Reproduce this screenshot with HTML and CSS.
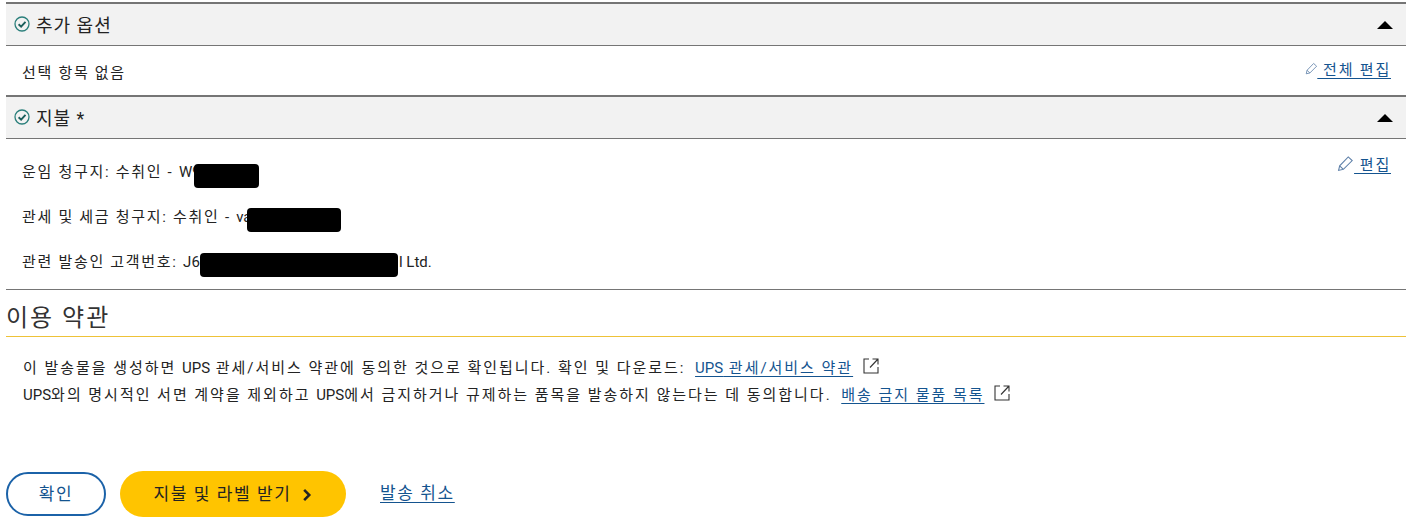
FILE: index.html
```html
<!DOCTYPE html>
<html lang="ko">
<head>
    <meta charset="UTF-8">
    <meta name="viewport" content="width=device-width, initial-scale=1.0">
    <title>UPS 발송 검토</title>
    <link rel="stylesheet" href="styles.css">
</head>
<body>
    <!-- Additional options -->
    <section class="review-section first">
        <div class="review-header">
            <h2>
                <svg class="check-icon" viewBox="0 0 16 16"><circle cx="8" cy="8" r="7"/><path class="tick" d="M4.6 8.2 7.1 10.6 11.5 5.8"/></svg>
                추가 옵션
            </h2>
            <span class="caret"></span>
        </div>
        <div class="review-body options-body">
            <p class="plain-row">선택 항목 없음</p>
            <a class="edit-link" href="#">
                <svg class="pencil small" viewBox="0 0 16 16"><path d="M1.5 14.5 2.5 10.2 10.6 1.8 14.3 5.2 6 13.5ZM2.5 10.2 6 13.5"/></svg>
                <span>&nbsp;전체 편집</span>
            </a>
        </div>
    </section>

    <!-- Payment -->
    <section class="review-section">
        <div class="review-header">
            <h2>
                <svg class="check-icon" viewBox="0 0 16 16"><circle cx="8" cy="8" r="7"/><path class="tick" d="M4.6 8.2 7.1 10.6 11.5 5.8"/></svg>
                지불 *
            </h2>
            <span class="caret"></span>
        </div>
        <div class="review-body payment-body">
            <div class="payment-rows">
                <p class="pay-row">운임 청구지: 수취인 - <span class="lat">W9</span><span class="redact r1"></span></p>
                <p class="pay-row">관세 및 세금 청구지: 수취인 - <span class="lat">va</span><span class="redact r2"></span></p>
                <p class="pay-row">관련 발송인 고객번호: <span class="lat">J6</span><span class="redact r3"></span><span class="tail lat">l Ltd.</span></p>
            </div>
            <a class="edit-link" href="#">
                <svg class="pencil" viewBox="0 0 16 16"><path d="M1.5 14.5 2.5 10.2 10.6 1.8 14.3 5.2 6 13.5ZM2.5 10.2 6 13.5"/></svg>
                <span>&nbsp;편집</span>
            </a>
        </div>
    </section>

    <!-- Terms -->
    <section class="terms">
        <h1>이용 약관</h1>
        <div class="terms-text">
            <p>이 발송물을 생성하면 <span class="lat">UPS</span> 관세/서비스 약관에 동의한 것으로 확인됩니다. 확인 및 다운로드: <a href="#"><span class="lat">UPS</span> 관세/서비스 약관</a>
                <svg class="ext-icon" viewBox="0 0 18 18"><path d="M7 2H2V16H16V10M10.5 2H16V7.5M16 2 8 10.5"/></svg></p>
            <p><span class="lat">UPS</span>와의 명시적인 서면 계약을 제외하고 <span class="lat">UPS</span>에서 금지하거나 규제하는 품목을 발송하지 않는다는 데 동의합니다. <a href="#">배송 금지 물품 목록</a>
                <svg class="ext-icon" viewBox="0 0 18 18"><path d="M7 2H2V16H16V10M10.5 2H16V7.5M16 2 8 10.5"/></svg></p>
        </div>
    </section>

    <!-- Actions -->
    <div class="actions">
        <button class="btn btn-outline">확인</button>
        <button class="btn btn-primary">지불 및 라벨 받기
            <svg class="chevron" viewBox="0 0 10 14"><path d="M2.5 2.5 7 7 2.5 11.5"/></svg>
        </button>
        <a class="cancel-link" href="#">발송 취소</a>
    </div>
</body>
</html>
```

FILE: styles.css
```css
/* Page */
body {
    margin: 0;
    padding: 2px 5px 0 6px;
    background-color: #ffffff;
    color: #232323;
    font-family: Roboto, "Noto Sans CJK KR", sans-serif;
    font-size: 15px;
    letter-spacing: 1.7px;
    height: 520px;
    overflow: hidden;
}

p {
    margin: 0;
}

a {
    color: #14548f;
}

/* Latin runs keep normal spacing */
.lat {
    letter-spacing: 0;
}

/* Collapsible review sections */
.review-header {
    display: flex;
    justify-content: space-between;
    align-items: center;
    height: 41px;
    background-color: #f2f2f2;
    border-top: 2px solid #757575;
    border-bottom: 1px solid #757575;
}

.review-header h2 {
    display: flex;
    align-items: center;
    gap: 6px;
    margin: 0 0 1px 8px;
    font-size: 18px;
    font-weight: 400;
    letter-spacing: 1px;
    color: #232323;
}

.check-icon {
    width: 16px;
    height: 16px;
    fill: none;
    stroke: #2a7f7b;
    stroke-width: 1.3;
}

.check-icon .tick {
    stroke: #1c5f5c;
    stroke-width: 1.9;
}

.caret {
    width: 0;
    height: 0;
    margin-right: 13px;
    border-left: 8px solid transparent;
    border-right: 8px solid transparent;
    border-bottom: 8px solid #000000;
}

.review-body {
    display: flex;
    justify-content: space-between;
    align-items: flex-start;
    padding: 0 15px 0 16px;
}

.options-body {
    height: 49px;
}

.plain-row {
    margin-top: 15px;
}

.options-body .edit-link {
    margin-top: 12px;
}

.payment-body {
    height: 150px;
    border-bottom: 1px solid #757575;
}

.payment-body .edit-link {
    margin-top: 14px;
}

.pay-row {
    position: relative;
    height: 20px;
    line-height: 20px;
    margin-bottom: 25px;
    white-space: nowrap;
}

.payment-rows {
    padding-top: 23px;
}

/* Redacted values drawn over the text */
.redact {
    position: absolute;
    height: 24px;
    background: #000000;
    border-radius: 4px;
}

.r1 { left: 172px; top: 2px; width: 65px; }
.r2 { left: 225px; top: 1px; width: 94px; }
.r3 { left: 178px; top: 1px; width: 198px; }

.tail {
    position: absolute;
    left: 377px;
    top: 0;
}

.edit-link {
    display: flex;
    align-items: center;
    gap: 0;
    letter-spacing: 1.8px;
    text-underline-offset: 3px;
}

.edit-link span {
    text-decoration: underline;
}

.pencil {
    width: 17px;
    height: 17px;
    fill: none;
    stroke: #5d7fa8;
    stroke-width: 1;
}

.pencil.small {
    width: 13px;
    height: 13px;
}

/* Terms */
.terms h1 {
    margin: 0;
    height: 46px;
    line-height: 57px;
    font-size: 24px;
    font-weight: 400;
    letter-spacing: 2px;
    border-bottom: 1px solid #eec238;
    color: #333333;
}

.terms-text {
    padding: 18px 0 0 17px;
    line-height: 27px;
    letter-spacing: 1.97px;
}

.terms-text a {
    margin-left: 4px;
    text-underline-offset: 3px;
}

.ext-icon {
    width: 18px;
    height: 18px;
    margin-left: 3px;
    vertical-align: -2px;
    fill: none;
    stroke: #333333;
    stroke-width: 1.1;
}

/* Action buttons */
.actions {
    display: flex;
    align-items: center;
    gap: 14px;
    margin-top: 62px;
}

.btn {
    font-family: inherit;
    border-radius: 24px;
    font-size: 17px;
    letter-spacing: 1.6px;
    height: 44px;
    padding: 0 0 3px;
    color: #232323;
}

.btn-outline {
    width: 100px;
    background: #ffffff;
    border: 2px solid #1b62a8;
    color: #14548f;
}

.btn-primary {
    display: flex;
    align-items: center;
    justify-content: center;
    gap: 9px;
    width: 226px;
    height: 46px;
    padding-bottom: 4px;
    background: #ffc400;
    border: none;
}

.chevron {
    width: 12px;
    height: 16px;
    margin-top: 5px;
    fill: none;
    stroke: #232323;
    stroke-width: 2.2;
}

.cancel-link {
    margin-left: 20px;
    padding-bottom: 5px;
    font-size: 17px;
    letter-spacing: 1.6px;
    text-underline-offset: 3px;
}
```
